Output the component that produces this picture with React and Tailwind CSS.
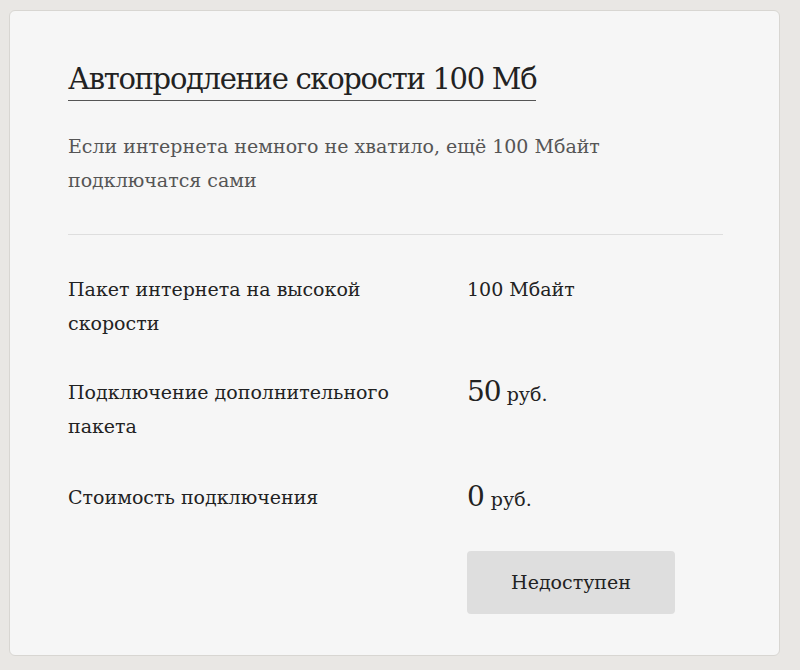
export default function App() {
  const f = { fontFamily: '"DejaVu Serif", "Liberation Serif", serif' };
  return (
    <div className="w-[800px] h-[670px] bg-[#e9e7e4] pt-[10px] pl-[9px]" style={f}>
      <div className="w-[771px] h-[646px] bg-[#f6f6f6] rounded-[6px] border border-[#d8d6d2] pl-[58px] pr-[56px] pt-[48px]">
        <div className="inline-block text-[29px] leading-[40px] tracking-[-1.3px] text-[#222] border-b border-[#555] pb-[1px]">Автопродление скорости 100 Мб</div>
        <p className="mt-[28px] text-[19px] leading-[34px] text-[#555] w-[620px]">Если интернета немного не хватило, ещё 100 Мбайт подключатся сами</p>
        <div className="mt-[37px] border-t border-[#dedede]" />
        <div className="mt-[37px] flex flex-col text-[19px] leading-[34px] text-[#222]">
          <div className="flex">
            <div className="w-[399px]">Пакет интернета на высокой<br />скорости</div>
            <div>100 Мбайт</div>
          </div>
          <div className="flex mt-[35px]">
            <div className="w-[399px]">Подключение дополнительного<br />пакета</div>
            <div><span className="text-[28px] tracking-[-1px]">50</span> руб.</div>
          </div>
          <div className="flex mt-[37px]">
            <div className="w-[399px]">Стоимость подключения</div>
            <div><span className="text-[28px]">0</span> руб.</div>
          </div>
        </div>
        <div className="mt-[35px] ml-[399px] w-[208px] h-[63px] bg-[#dedede] rounded-[4px] flex items-center justify-center text-[19px] text-[#222]">Недоступен</div>
      </div>
    </div>
  );
}
